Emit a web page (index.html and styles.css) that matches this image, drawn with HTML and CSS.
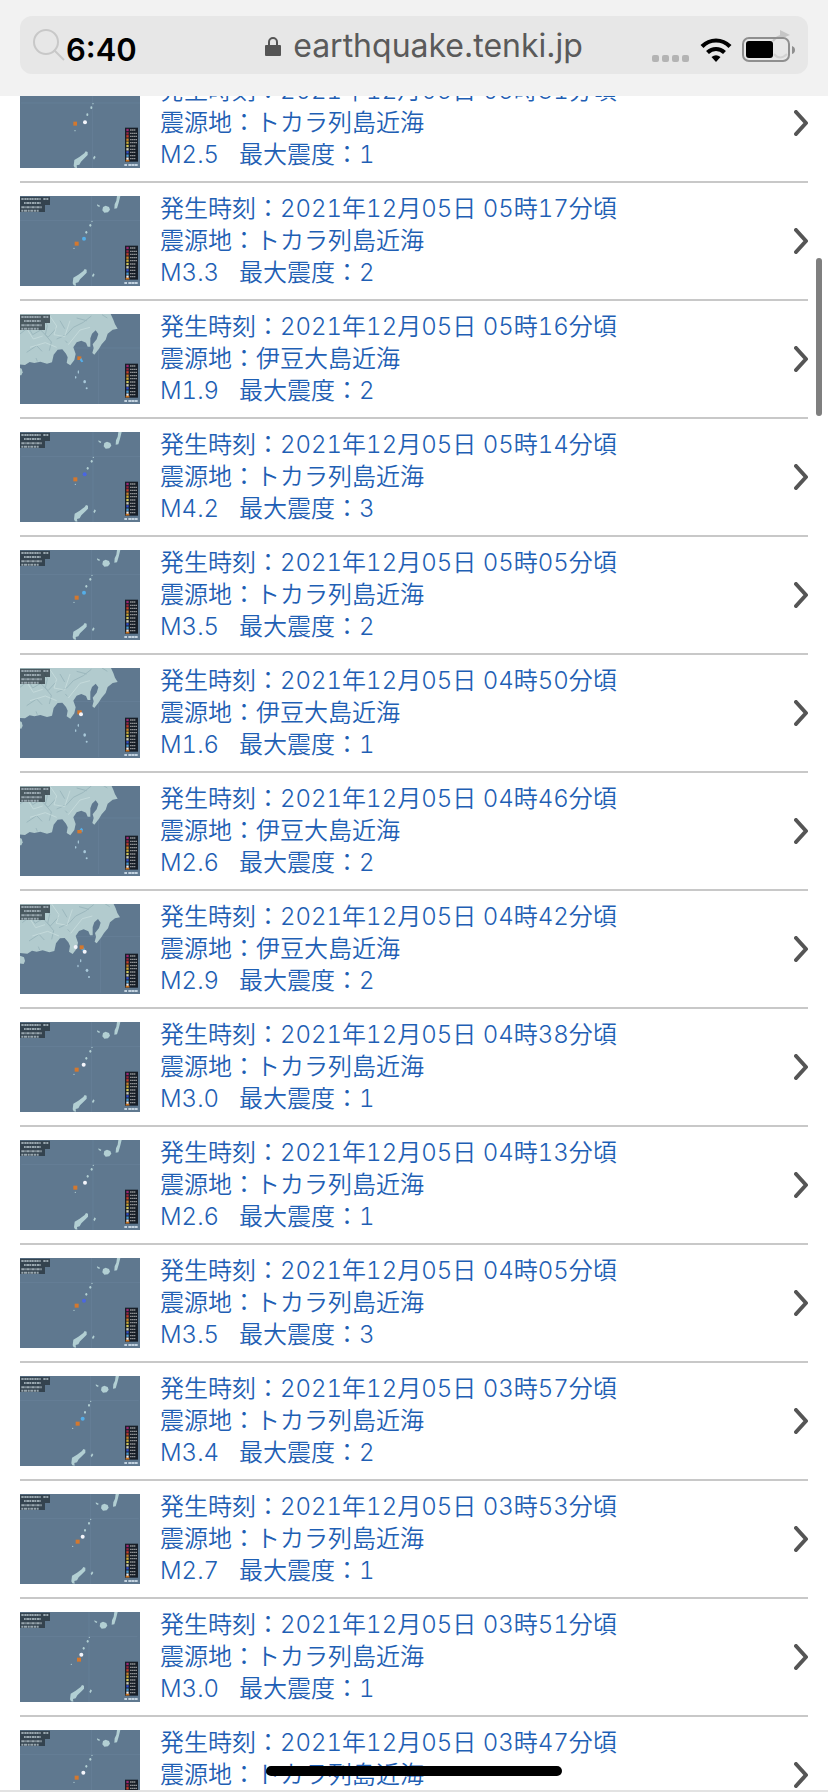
FILE: index.html
```
<!DOCTYPE html>
<html lang="ja">
<head>
    <meta charset="UTF-8">
    <meta name="viewport" content="width=device-width, initial-scale=1.0">
    <title>地震情報</title>
    <link rel="stylesheet" href="styles.css">
</head>
<body>

    <!-- shared map parts -->
    <svg class="defs" aria-hidden="true">
        <symbol id="tokara" viewBox="0 0 360 270" overflow="visible">
            <path d="M0 74H360M215 0V270" stroke="#68829b" stroke-width="2"/>
            <g fill="#b2cfd3">
                <path d="M291 0H301L296 20L291 37L283 38L284 25L289 14Z"/>
                <path d="M249 33L257 29L267 33L270 41L264 49L253 50L247 43Z"/>
                <path d="M231 25L240 29L238 33L232 30Z"/>
                <path d="M158 262L160 245L175 236L190 225L194 219L200 221L200 230L191 239L180 250L175 259L167 261L168 269L161 268Z"/>
                <path d="M216 239L220 232L224 236L219 244Z"/>
                <circle cx="216" cy="76" r="2"/>
                <ellipse cx="211" cy="88" rx="3" ry="4"/>
                <ellipse cx="199" cy="109" rx="3" ry="4"/>
                <circle cx="162" cy="157" r="2"/>
            </g>
        </symbol>
        <symbol id="izu" viewBox="0 0 360 270" overflow="visible">
            <path d="M0 102H360M235 0V270" stroke="#68829b" stroke-width="2"/>
            <path fill="#b2cbce" d="M-10 0H272L280 17L285 31L293 44L278 47L263 59L257 77L245 91L237 104L223 122L217 117L221 102L218 91L230 76L235 60L227 49L216 59L211 73L211 98L203 98L198 86L184 80L170 85L160 100L167 120L163 138L151 154L140 147L143 130L138 119L127 106L113 107L101 122L96 145L81 149L61 143L43 147L29 144L15 153L-10 151Z"/>
            <path fill="#b2cbce" d="M-10 158L5 164L8 175L4 184L-10 182Z"/>
            <g fill="none" stroke="#93b0b7" stroke-width="3" opacity=".7">
                <path d="M0 60L25 40L38 62L62 48L84 70L108 44M70 10L82 35L76 62L94 84L88 110M20 115L50 95L66 112M110 75L140 62L160 40L190 25L214 6M48 132L52 142M136 80L142 87"/>
                <path d="M246 2L262 12M170 12L200 20M120 20L134 44"/>
            </g>
            <path d="M5 20L40 75L68 66M88 4L110 36L102 62L134 68L150 20M30 100L76 86L110 100M145 92L180 48L210 40" fill="none" stroke="#ccdfe0" stroke-width="3" opacity=".7"/>
            <g fill="#a9c9da">
                <ellipse cx="175" cy="174" rx="2" ry="5"/>
                <ellipse cx="167" cy="190" rx="2" ry="4"/>
                <ellipse cx="194" cy="203" rx="4" ry="5"/>
                <circle cx="200" cy="223" r="3"/>
            </g>
        </symbol>
        <symbol id="labels" viewBox="0 0 360 270">
            <path d="M0 2H90V27H75V48H0Z" fill="#25313a" opacity=".75"/>
            <g stroke="#98a6ae" stroke-width="6">
                <path d="M4 9H62M70 9H86" stroke-dasharray="7 2 5 1"/>
                <path d="M12 21H62" stroke-dasharray="5 2 8 1"/>
                <path d="M4 34H66" stroke-dasharray="8 1 4 2"/>
                <path d="M4 44H56" stroke-dasharray="6 2 9 2"/>
            </g>
            <rect x="315" y="149" width="39" height="102" fill="#171e27"/>
            <g stroke-width="7">
                <path d="M319 156H326" stroke="#9c2674"/>
                <path d="M319 166H326" stroke="#982444"/>
                <path d="M319 175H326" stroke="#c53e2b"/>
                <path d="M319 185H326" stroke="#cc7f2a"/>
                <path d="M319 194H326" stroke="#cdab37"/>
                <path d="M319 204H326" stroke="#d2c75b"/>
                <path d="M319 214H326" stroke="#cccdb8"/>
                <path d="M319 223H326" stroke="#3551cc"/>
                <path d="M319 233H326" stroke="#4b9bd4"/>
                <path d="M319 242H326" stroke="#eeeeee"/>
                <path d="M317 248H328" stroke="#cc7420" stroke-width="5"/>
            </g>
            <g stroke="#8e9093" stroke-width="4" stroke-dasharray="5 1">
                <path d="M330 156H346M330 166H351M330 175H351M330 185H351M330 194H351M330 204H346M330 214H346M330 223H346M330 233H346M330 242H346"/>
            </g>
            <path d="M313 261H321M325 261H354" stroke="#c3d2df" stroke-width="6" stroke-dasharray="8 1"/>
        </symbol>
        <symbol id="arrow" viewBox="0 0 14 26">
            <path d="M2 2L12 13L2 24" fill="none" stroke="#555" stroke-width="4" stroke-linecap="round" stroke-linejoin="round"/>
        </symbol>
    </svg>

    <header class="browser-bar">
        <div class="address">
            <div class="status-left">
                <svg class="search-icon" viewBox="0 0 34 34" aria-hidden="true"><circle cx="14" cy="14" r="12"/><path d="M22 22L32 32"/></svg>
                <time class="clock">6:40</time>
            </div>
            <button class="site">
                <svg class="lock" viewBox="0 0 16 20" aria-hidden="true"><path d="M4 10V6a4 4 0 0 1 8 0v4" fill="none" stroke="#555" stroke-width="2"/><rect y="9" width="16" height="11" rx="1" fill="#555"/></svg>
                <span>earthquake.tenki.jp</span>
            </button>
            <div class="status-right">
                <svg class="signal" viewBox="0 0 38 8" aria-hidden="true"><g fill="#b4b4b4"><rect width="7" height="7" y="1" rx="2"/><rect x="10" width="7" height="7" y="1" rx="2"/><rect x="20" width="7" height="7" y="1" rx="2"/><rect x="30" width="7" height="7" y="1" rx="2"/></g></svg>
                <svg class="wifi" viewBox="0 0 32 24" aria-hidden="true"><path d="M2 8.500C10 .5 22 .5 30 8.500M7.500 14.500C12.500 9.800 19.500 9.800 24.500 14.500" fill="none" stroke="#000" stroke-width="4.200"/><path d="M11.500 19Q16 15.500 20.500 19L16 24Z"/></svg>
                <svg class="battery" viewBox="0 0 54 32" aria-hidden="true">
                    <path d="M31 11Q36 5 43 6" fill="none" stroke="#c6c6c6" stroke-width="2"/>
                    <path d="M38 0L48 5L38 9Z" fill="#c6c6c6"/>
                    <path d="M32 24Q38 31 45 24" fill="none" stroke="#d2d2d2" stroke-width="2"/>
                    <rect x="1" y="8" width="46" height="23" rx="6" fill="none" stroke="#8f8f8f" stroke-width="2"/>
                    <rect x="4" y="11" width="27" height="17" rx="3"/>
                    <path d="M50 16Q53 17 53 20Q53 23 50 24Z" fill="#8f8f8f"/>
                </svg>
            </div>
        </div>
    </header>

    <main>
        <ul class="quake-list">
            <li>
                <a class="quake" href="#">
                    <svg class="map" viewBox="0 0 360 270"><use href="#tokara" x="3" y="1"/><use href="#labels"/><rect class="epicenter" x="160" y="131" width="11" height="12"/><circle class="level1" cx="195" cy="133" r="6"/></svg>
                    <div class="info"><p>発生時刻：2021年12月05日 05時31分頃</p><p>震源地：トカラ列島近海</p><p><span class="magnitude">M2.5</span>最大震度：1</p></div>
                    <svg class="arrow"><use href="#arrow"/></svg>
                </a>
            </li>
            <li>
                <a class="quake" href="#">
                    <svg class="map" viewBox="0 0 360 270"><use href="#tokara"/><use href="#labels"/><rect class="epicenter" x="164" y="137" width="12" height="12"/><circle class="level2" cx="192" cy="128" r="6"/></svg>
                    <div class="info"><p>発生時刻：2021年12月05日 05時17分頃</p><p>震源地：トカラ列島近海</p><p><span class="magnitude">M3.3</span>最大震度：2</p></div>
                    <svg class="arrow"><use href="#arrow"/></svg>
                </a>
            </li>
            <li>
                <a class="quake" href="#">
                    <svg class="map" viewBox="0 0 360 270"><use href="#izu"/><use href="#labels"/><rect class="epicenter" x="172" y="127" width="12" height="11"/><path class="level2" d="M184 132L190 143L184 145L179 137Z"/></svg>
                    <div class="info"><p>発生時刻：2021年12月05日 05時16分頃</p><p>震源地：伊豆大島近海</p><p><span class="magnitude">M1.9</span>最大震度：2</p></div>
                    <svg class="arrow"><use href="#arrow"/></svg>
                </a>
            </li>
            <li>
                <a class="quake" href="#">
                    <svg class="map" viewBox="0 0 360 270"><use href="#tokara" x="4"/><use href="#labels"/><rect class="epicenter" x="160" y="136" width="12" height="12"/><circle class="level3" cx="194" cy="127" r="6"/></svg>
                    <div class="info"><p>発生時刻：2021年12月05日 05時14分頃</p><p>震源地：トカラ列島近海</p><p><span class="magnitude">M4.2</span>最大震度：3</p></div>
                    <svg class="arrow"><use href="#arrow"/></svg>
                </a>
            </li>
            <li>
                <a class="quake" href="#">
                    <svg class="map" viewBox="0 0 360 270"><use href="#tokara"/><use href="#labels"/><rect class="epicenter" x="164" y="137" width="12" height="12"/><circle class="level2" cx="192" cy="128" r="6"/></svg>
                    <div class="info"><p>発生時刻：2021年12月05日 05時05分頃</p><p>震源地：トカラ列島近海</p><p><span class="magnitude">M3.5</span>最大震度：2</p></div>
                    <svg class="arrow"><use href="#arrow"/></svg>
                </a>
            </li>
            <li>
                <a class="quake" href="#">
                    <svg class="map" viewBox="0 0 360 270"><use href="#izu" y="-2"/><use href="#labels"/><rect class="epicenter" x="172" y="127" width="13" height="12"/><circle class="level1" cx="183" cy="139" r="6"/></svg>
                    <div class="info"><p>発生時刻：2021年12月05日 04時50分頃</p><p>震源地：伊豆大島近海</p><p><span class="magnitude">M1.6</span>最大震度：1</p></div>
                    <svg class="arrow"><use href="#arrow"/></svg>
                </a>
            </li>
            <li>
                <a class="quake" href="#">
                    <svg class="map" viewBox="0 0 360 270"><use href="#izu" y="-6"/><use href="#labels"/><path class="level2" d="M178 133L184 125L189 130L187 139Z"/><rect class="epicenter" x="172" y="132" width="13" height="10"/></svg>
                    <div class="info"><p>発生時刻：2021年12月05日 04時46分頃</p><p>震源地：伊豆大島近海</p><p><span class="magnitude">M2.6</span>最大震度：2</p></div>
                    <svg class="arrow"><use href="#arrow"/></svg>
                </a>
            </li>
            <li>
                <a class="quake" href="#">
                    <svg class="map" viewBox="0 0 360 270"><use href="#izu" x="7" y="-4"/><use href="#labels"/><circle class="level1" cx="167" cy="129" r="6"/><circle class="level2" cx="189" cy="135" r="5"/><circle class="level1" cx="194" cy="143" r="6"/><rect class="epicenter" x="179" y="124" width="12" height="12"/></svg>
                    <div class="info"><p>発生時刻：2021年12月05日 04時42分頃</p><p>震源地：伊豆大島近海</p><p><span class="magnitude">M2.9</span>最大震度：2</p></div>
                    <svg class="arrow"><use href="#arrow"/></svg>
                </a>
            </li>
            <li>
                <a class="quake" href="#">
                    <svg class="map" viewBox="0 0 360 270"><use href="#tokara"/><use href="#labels"/><rect class="epicenter" x="164" y="137" width="12" height="12"/><circle class="level1" cx="191" cy="128" r="6"/></svg>
                    <div class="info"><p>発生時刻：2021年12月05日 04時38分頃</p><p>震源地：トカラ列島近海</p><p><span class="magnitude">M3.0</span>最大震度：1</p></div>
                    <svg class="arrow"><use href="#arrow"/></svg>
                </a>
            </li>
            <li>
                <a class="quake" href="#">
                    <svg class="map" viewBox="0 0 360 270"><use href="#tokara" x="4"/><use href="#labels"/><rect class="epicenter" x="160" y="137" width="12" height="12"/><circle class="level1" cx="195" cy="128" r="6"/></svg>
                    <div class="info"><p>発生時刻：2021年12月05日 04時13分頃</p><p>震源地：トカラ列島近海</p><p><span class="magnitude">M2.6</span>最大震度：1</p></div>
                    <svg class="arrow"><use href="#arrow"/></svg>
                </a>
            </li>
            <li>
                <a class="quake" href="#">
                    <svg class="map" viewBox="0 0 360 270"><use href="#tokara"/><use href="#labels"/><rect class="epicenter" x="164" y="137" width="12" height="12"/><circle class="level3" cx="192" cy="128" r="6"/></svg>
                    <div class="info"><p>発生時刻：2021年12月05日 04時05分頃</p><p>震源地：トカラ列島近海</p><p><span class="magnitude">M3.5</span>最大震度：3</p></div>
                    <svg class="arrow"><use href="#arrow"/></svg>
                </a>
            </li>
            <li>
                <a class="quake" href="#">
                    <svg class="map" viewBox="0 0 360 270"><use href="#tokara" x="-4"/><use href="#labels"/><rect class="epicenter" x="167" y="137" width="12" height="12"/><circle class="level2" cx="188" cy="128" r="6"/></svg>
                    <div class="info"><p>発生時刻：2021年12月05日 03時57分頃</p><p>震源地：トカラ列島近海</p><p><span class="magnitude">M3.4</span>最大震度：2</p></div>
                    <svg class="arrow"><use href="#arrow"/></svg>
                </a>
            </li>
            <li>
                <a class="quake" href="#">
                    <svg class="map" viewBox="0 0 360 270"><use href="#tokara" x="-4"/><use href="#labels"/><rect class="epicenter" x="167" y="137" width="12" height="12"/><circle class="level1" cx="188" cy="128" r="6"/></svg>
                    <div class="info"><p>発生時刻：2021年12月05日 03時53分頃</p><p>震源地：トカラ列島近海</p><p><span class="magnitude">M2.7</span>最大震度：1</p></div>
                    <svg class="arrow"><use href="#arrow"/></svg>
                </a>
            </li>
            <li>
                <a class="quake" href="#">
                    <svg class="map" viewBox="0 0 360 270"><use href="#tokara" x="-8"/><use href="#labels"/><rect class="epicenter" x="171" y="137" width="12" height="12"/><circle class="level1" cx="184" cy="128" r="6"/></svg>
                    <div class="info"><p>発生時刻：2021年12月05日 03時51分頃</p><p>震源地：トカラ列島近海</p><p><span class="magnitude">M3.0</span>最大震度：1</p></div>
                    <svg class="arrow"><use href="#arrow"/></svg>
                </a>
            </li>
            <li>
                <a class="quake" href="#">
                    <svg class="map" viewBox="0 0 360 270"><use href="#tokara"/><use href="#labels"/><rect class="epicenter" x="164" y="137" width="12" height="12"/><circle class="level1" cx="190" cy="128" r="6"/></svg>
                    <div class="info"><p>発生時刻：2021年12月05日 03時47分頃</p><p>震源地：トカラ列島近海</p><p><span class="magnitude">M2.8</span>最大震度：1</p></div>
                    <svg class="arrow"><use href="#arrow"/></svg>
                </a>
            </li>
        </ul>
    </main>

    <div class="scroll-thumb"></div>
    <div class="home-indicator"></div>

</body>
</html>
```
FILE: styles.css
```
* {
    box-sizing: border-box;
}

body {
    margin: 0;
    height: 100vh;
    overflow: hidden;
    background: #fff;
    font-family: Inter, "Noto Sans CJK JP", sans-serif;
}

/* top edge of the bottom toolbar */
body::after {
    content: "";
    position: fixed;
    left: 0;
    right: 0;
    bottom: 0;
    height: 2px;
    background: #e2e2e2;
}

.defs {
    position: absolute;
    width: 0;
    height: 0;
}

.browser-bar {
    position: fixed;
    top: 0;
    left: 0;
    right: 0;
    height: 96px;
    padding: 16px 20px;
    background: #f2f2f2;
    z-index: 2;
}

.address {
    display: grid;
    grid-template-columns: 1fr auto 1fr;
    align-items: center;
    height: 58px;
    padding: 0 12px;
    border-radius: 12px;
    background: #e7e7e7;
}

.status-left,
.status-right {
    display: flex;
    align-items: center;
}

.search-icon {
    width: 34px;
    height: 34px;
    fill: none;
    stroke: #c8c8c8;
    stroke-width: 2;
}

.clock {
    padding-top: 10px;
    font-size: 31px;
    font-weight: 600;
    line-height: 40px;
}

.site {
    display: flex;
    align-items: center;
    gap: 12px;
    padding: 2px 0 0 20px;
    border: none;
    background: none;
    color: #5a5a5a;
    font-family: Inter, sans-serif;
    font-size: 32px;
    line-height: 40px;
}

.lock {
    width: 16px;
    height: 20px;
}

.status-right {
    justify-content: flex-end;
    align-items: flex-end;
    gap: 10px;
    height: 34px;
}

.signal {
    width: 38px;
    height: 8px;
}

.wifi {
    width: 32px;
    height: 24px;
}

.battery {
    width: 54px;
    height: 32px;
}

/* list is scrolled part way under the bar */
main {
    padding: 65px 20px 0;
}

.quake-list {
    margin: 0;
    padding: 0;
    list-style: none;
}

.quake {
    display: flex;
    align-items: center;
    gap: 20px;
    padding: 10px 0;
    border-bottom: 2px solid #c8c8c8;
    color: #1f5fb4;
    text-decoration: none;
}

.map {
    flex: none;
    width: 120px;
    height: 90px;
    background: #5f788f;
}

.map use {
    width: 360px;
    height: 270px;
}

.epicenter {
    fill: #d4782e;
}

.level1 {
    fill: #f4f5fb;
}

.level2 {
    fill: #55aee8;
}

.level3 {
    fill: #4a66e2;
}

.info {
    flex: 1;
    font-size: 24px;
    font-weight: 350;
    line-height: 32px;
    font-variant-numeric: tabular-nums;
}

.info p {
    margin: 0;
}

.magnitude {
    margin-right: 20px;
}

.arrow {
    flex: none;
    width: 14px;
    height: 26px;
}

.scroll-thumb {
    position: fixed;
    top: 258px;
    right: 6px;
    width: 6px;
    height: 158px;
    border-radius: 3px;
    background: #7f7f7f;
}

.home-indicator {
    position: fixed;
    bottom: 16px;
    left: 50%;
    width: 296px;
    height: 10px;
    margin-left: -148px;
    border-radius: 5px;
    background: #000;
}
```
